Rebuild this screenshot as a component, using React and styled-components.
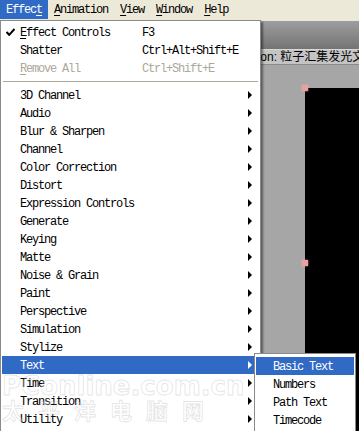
import React from "react";
import styled, { createGlobalStyle } from "styled-components";

const Global = createGlobalStyle`
  html, body {
    margin: 0;
    padding: 0;
    width: 359px;
    height: 431px;
    overflow: hidden;
    background: #a6a6a6;
  }
`;

const mono = `"Liberation Mono", "Noto Sans CJK SC", monospace`;

const items = [
  { label: "3D Channel" },
  { label: "Audio" },
  { label: "Blur & Sharpen" },
  { label: "Channel" },
  { label: "Color Correction" },
  { label: "Distort" },
  { label: "Expression Controls" },
  { label: "Generate" },
  { label: "Keying" },
  { label: "Matte" },
  { label: "Noise & Grain" },
  { label: "Paint" },
  { label: "Perspective" },
  { label: "Simulation" },
  { label: "Stylize" },
  { label: "Text", active: true },
  { label: "Time" },
  { label: "Transition" },
  { label: "Utility" },
];

const subItems = ["Basic Text", "Numbers", "Path Text", "Timecode"];

const Page = styled.div`
  position: relative;
  width: 359px;
  height: 431px;
  display: flex;
  flex-direction: column;
  font-family: ${mono};
  font-size: 12px;
  letter-spacing: -1.2px;
  color: #000;
`;

const MenuBar = styled.div`
  display: flex;
  height: 20px;
  background: #ece9d8;
  flex-shrink: 0;
`;

const BarItem = styled.div`
  display: flex;
  align-items: center;
  padding: 1px 6px 0 6px;
  height: 19px;
  box-sizing: border-box;
  background: ${(p) => (p.$open ? "#316ac5" : "transparent")};
  color: ${(p) => (p.$open ? "#fff" : "#000")};
`;

const U = styled.span`
  text-decoration: underline;
  text-underline-offset: 2px;
`;

const Workspace = styled.div`
  flex: 1;
  display: flex;
  flex-direction: column;
  background: #a6a6a6;
`;

const ToolStrip = styled.div`
  height: 28px;
  border-top: 1px solid #e6e6e6;
  background: linear-gradient(#9e9e9e, #747474);
`;

const CompTitle = styled.div`
  height: 14px;
  background: #c4c4c4;
  border-top: 1px solid #d8d8d8;
  border-bottom: 1px solid #8a8a8a;
  padding-left: 207px;
  font-family: "Liberation Sans", "Noto Sans CJK SC", sans-serif;
  font-size: 12px;
  letter-spacing: 0;
  line-height: 14px;
  white-space: nowrap;
  overflow: hidden;
`;

const Viewer = styled.div`
  flex: 1;
  padding: 23px 0 0 305px;
  display: flex;
`;

const Canvas = styled.div`
  position: relative;
  flex: 1;
  background: #000;
`;

const Handle = styled.span`
  position: absolute;
  left: -3px;
  top: ${(p) => p.$top}px;
  width: 6px;
  height: 6px;
  background: #e8a0a0;
  box-shadow: 0 0 2px #f0b8b8;
`;

const Dropdown = styled.div`
  position: absolute;
  left: 0;
  top: 20px;
  width: 257px;
  padding: 2px 1px 3px 1px;
  background: #fff;
  border: 1px solid #8a8a8a;
  box-shadow: 2px 2px 2px rgba(0, 0, 0, 0.45);
`;

const Row = styled.div`
  position: relative;
  display: flex;
  align-items: center;
  box-sizing: border-box;
  height: 18px;
  padding: 1px 0 0 18px;
  background: ${(p) => (p.$active ? "#316ac5" : "transparent")};
  color: ${(p) => (p.$active ? "#fff" : p.$disabled ? "#aca899" : "#000")};
  white-space: nowrap;
`;

const Label = styled.span`
  width: 122px;
`;

const Shortcut = styled.span``;

const Check = styled.svg`
  position: absolute;
  left: 4px;
  top: 5px;
`;

const Arrow = styled.span`
  position: absolute;
  left: 246px;
  top: 5px;
  width: 0;
  height: 0;
  border-top: 4px solid transparent;
  border-bottom: 4px solid transparent;
  border-left: 4px solid ${(p) => (p.$active ? "#fff" : "#000")};
`;

const Separator = styled.div`
  height: 1px;
  margin: 4px 1px 4px 1px;
  background: #aca899;
`;

const SubMenu = styled.div`
  position: absolute;
  left: 254px;
  top: 353px;
  width: 98px;
  padding: 3px 1px 2px 1px;
  background: #fff;
  border: 1px solid #8a8a8a;
  box-shadow: 2px 2px 2px rgba(0, 0, 0, 0.45);
`;

const SubRow = styled.div`
  display: flex;
  align-items: center;
  box-sizing: border-box;
  height: 18px;
  padding: 1px 0 0 17px;
  background: ${(p) => (p.$active ? "#316ac5" : "transparent")};
  color: ${(p) => (p.$active ? "#fff" : "#000")};
  white-space: nowrap;
`;

const Watermark = styled.div`
  position: absolute;
  left: 2px;
  top: 372px;
  display: flex;
  flex-direction: column;
  pointer-events: none;
  font-family: "DejaVu Sans", "Noto Sans CJK SC", sans-serif;
  font-weight: bold;
  letter-spacing: 0;
  color: rgba(255, 255, 255, 0.25);
  -webkit-text-stroke: 1px rgba(140, 140, 140, 0.22);
`;

const Mark = styled.span`
  font-size: ${(p) => p.$size}px;
  line-height: ${(p) => p.$size + 2}px;
  letter-spacing: ${(p) => p.$spacing}px;
`;

export default function App() {
  return (
    <>
      <Global />
      <Page>
        <MenuBar>
          <BarItem $open>
            Effec<U>t</U>
          </BarItem>
          <BarItem>
            <U>A</U>nimation
          </BarItem>
          <BarItem>
            <U>V</U>iew
          </BarItem>
          <BarItem>
            <U>W</U>indow
          </BarItem>
          <BarItem>
            <U>H</U>elp
          </BarItem>
        </MenuBar>
        <Workspace>
          <ToolStrip />
          <CompTitle>Composition: 粒子汇集发光文字</CompTitle>
          <Viewer>
            <Canvas>
              <Handle $top={-3} />
              <Handle $top={172} />
            </Canvas>
          </Viewer>
        </Workspace>

        <Dropdown>
          <Row>
            <Check width="9" height="8" viewBox="0 0 9 8">
              <path d="M0.5 4 L3.2 6.8 L8.5 1" stroke="#000" strokeWidth="2" fill="none" />
            </Check>
            <Label>
              <U>E</U>ffect Controls
            </Label>
            <Shortcut>F3</Shortcut>
          </Row>
          <Row>
            <Label>Shatter</Label>
            <Shortcut>Ctrl+Alt+Shift+E</Shortcut>
          </Row>
          <Row $disabled>
            <Label>
              <U>R</U>emove All
            </Label>
            <Shortcut>Ctrl+Shift+E</Shortcut>
          </Row>
          <Separator />
          {items.map((it) => (
            <Row key={it.label} $active={it.active}>
              <Label>{it.label}</Label>
              <Arrow $active={it.active} />
            </Row>
          ))}
        </Dropdown>

        <Watermark>
          <Mark $size={26} $spacing={0}>PConline.com.cn</Mark>
          <Mark $size={22} $spacing={14}>太平洋电脑网</Mark>
        </Watermark>

        <SubMenu>
          {subItems.map((s, i) => (
            <SubRow key={s} $active={i === 0}>
              {s}
            </SubRow>
          ))}
        </SubMenu>
      </Page>
    </>
  );
}
